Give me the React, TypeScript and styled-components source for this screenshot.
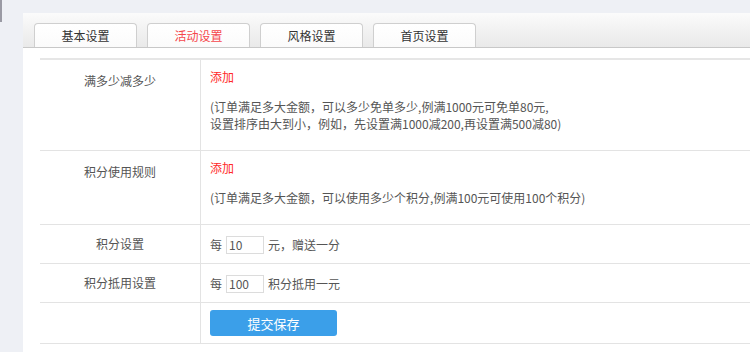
import { createGlobalStyle, styled } from "styled-components";

const GlobalStyle = createGlobalStyle`
  html, body {
    margin: 0;
    padding: 0;
    background: #eef0f5;
    font-family: "Noto Sans CJK SC", "Noto Sans", sans-serif;
    font-size: 12px;
    color: #555;
  }
  * { box-sizing: border-box; }
`;

const tabs = ["基本设置", "活动设置", "风格设置", "首页设置"];

const App = () => {
  return (
    <>
      <GlobalStyle />
      <Page>
        <Edge />
        <Panel>
          <TabBar>
            {tabs.map((tab) => (
              <Tab key={tab} $active={tab === "活动设置"}>
                {tab}
              </Tab>
            ))}
          </TabBar>
          <Body>
            <FormTable>
              <Row>
                <Label>满多少减多少</Label>
                <Cell $tall>
                  <AddLink>添加</AddLink>
                  <Note>
                    (订单满足多大金额，可以多少免单多少,例满1000元可免单80元,
                    <br />
                    设置排序由大到小，例如，先设置满1000减200,再设置满500减80)
                  </Note>
                </Cell>
              </Row>
              <Row>
                <Label>积分使用规则</Label>
                <Cell $tall>
                  <AddLink>添加</AddLink>
                  <Note>(订单满足多大金额，可以使用多少个积分,例满100元可使用100个积分)</Note>
                </Cell>
              </Row>
              <Row>
                <Label $center>积分设置</Label>
                <Cell>
                  <Inline>
                    每 <SmallInput defaultValue="10" /> 元，赠送一分
                  </Inline>
                </Cell>
              </Row>
              <Row>
                <Label $center>积分抵用设置</Label>
                <Cell>
                  <Inline>
                    每 <SmallInput defaultValue="100" /> 积分抵用一元
                  </Inline>
                </Cell>
              </Row>
              <Row>
                <Label />
                <Cell $button>
                  <SaveButton>提交保存</SaveButton>
                </Cell>
              </Row>
            </FormTable>
          </Body>
        </Panel>
      </Page>
    </>
  );
};

export default App;

const Page = styled.div`
  display: flex;
  align-items: flex-start;
  width: 750px;
  height: 352px;
  overflow: hidden;
`;

const Edge = styled.div`
  width: 2px;
  height: 22px;
  background: #9a9aa4;
  flex-shrink: 0;
`;

const Panel = styled.div`
  flex: 1;
  margin: 13px 0 0 21px;
  background: #fff;
  min-height: 400px;
`;

const TabBar = styled.div`
  display: flex;
  gap: 10px;
  height: 35px;
  padding: 10px 0 0 11px;
  background: linear-gradient(#fbfbfb, #e9e9e9);
  border-bottom: 1px solid #c8c8c8;
`;

const Tab = styled.div<{ $active?: boolean }>`
  width: 103px;
  height: 24px;
  line-height: 23px;
  text-align: center;
  font-size: 12px;
  color: ${(p) => (p.$active ? "#f5474c" : "#333")};
  background: linear-gradient(#ffffff, #fbfbfb);
  border: 1px solid #cfcfcf;
  border-bottom: none;
  border-radius: 4px 4px 0 0;
`;

const Body = styled.div`
  padding: 10px 0 0 17px;
`;

const FormTable = styled.div`
  border-top: 2px solid #e6e6e6;
`;

const Row = styled.div`
  display: flex;
  border-bottom: 1px solid #e3e3e3;
`;

const Label = styled.div<{ $center?: boolean }>`
  width: 161px;
  flex-shrink: 0;
  border-right: 1px solid #e3e3e3;
  text-align: center;
  padding-top: ${(p) => (p.$center ? "10px" : "12px")};
  line-height: 17px;
  color: #555;
`;

const Cell = styled.div<{ $tall?: boolean; $button?: boolean }>`
  flex: 1;
  line-height: 17px;
  padding: ${(p) =>
    p.$tall ? "8px 9px 18px" : p.$button ? "7px 9px 7px" : "10px 9px 9px"};
`;

const AddLink = styled.a`
  display: block;
  color: #ff2a2a;
  margin-bottom: 13px;
  cursor: pointer;
`;

const Note = styled.div`
  color: #555;
`;

const Inline = styled.div`
  display: flex;
  align-items: center;
  gap: 4px;
  height: 19px;
  color: #555;
`;

const SmallInput = styled.input`
  width: 38px;
  height: 18px;
  border: 1px solid #dcdcdc;
  padding: 0 2px;
  font-family: "Noto Sans CJK SC", "Noto Sans", sans-serif;
  font-size: 12px;
  color: #555;
  outline: none;
`;

const SaveButton = styled.button`
  width: 127px;
  height: 26px;
  border: none;
  border-radius: 3px;
  background: #3b9fe9;
  color: #fff;
  font-family: "Noto Sans CJK SC", "Noto Sans", sans-serif;
  font-size: 13px;
  cursor: pointer;
`;
